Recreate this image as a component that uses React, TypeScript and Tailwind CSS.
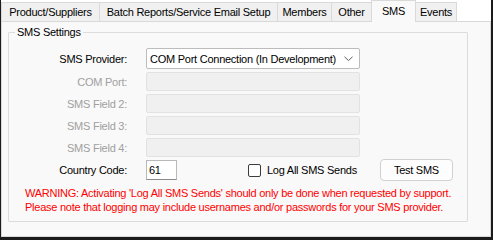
import React from "react";

const tabs = [
  { label: "Product/Suppliers", w: 99 },
  { label: "Batch Reports/Service Email Setup", w: 179 },
  { label: "Members", w: 55 },
  { label: "Other", w: 41 },
  { label: "SMS", w: 45, active: true },
  { label: "Events", w: 42 },
];

function Label({ text, disabled }: { text: string; disabled?: boolean }) {
  return (
    <div
      className={
        "w-[119px] shrink-0 text-right pr-px " +
        (disabled ? "text-[#a0a0a0]" : "text-black")
      }
    >
      {text}
    </div>
  );
}

function DisabledRow({ text }: { text: string }) {
  return (
    <div className="flex items-center h-[19px] gap-[18px]">
      <Label text={text} disabled />
      <div className="w-[214px] h-[19px] bg-[#f0f0f0] border border-[#e2e2e2] rounded-[2px]" />
    </div>
  );
}

export default function App() {
  return (
    <div
      className="w-[493px] h-[241px] bg-white text-[11px] leading-[14px] tracking-[-0.25px] whitespace-nowrap"
      style={{ fontFamily: '"Liberation Sans", Arial, sans-serif' }}
    >
      <div className="w-[493px] h-[240px] border-l border-r-2 border-b-[3px] border-[#1b1b1b] flex flex-col bg-white">
        {/* Tab strip */}
        <div className="h-[21px] flex items-end shrink-0 relative z-10">
          {tabs.map((t, i) =>
            t.active ? (
              <div
                key={t.label}
                style={{ width: t.w }}
                className="h-[22px] -mb-px -ml-px bg-[#f9f9f9] border border-b-0 border-[#d9d9d9] flex items-start justify-center pt-[3px] text-black relative z-10"
              >
                {t.label}
              </div>
            ) : (
              <div
                key={t.label}
                style={{ width: t.w }}
                className={
                  "h-[19px] bg-[#f0f0f0] border border-b-0 border-[#d9d9d9] flex items-center justify-center text-black " +
                  (i > 0 ? "-ml-px" : "")
                }
              >
                {t.label}
              </div>
            )
          )}
        </div>
        {/* Panel */}
        <div className="flex-1 border border-[#d9d9d9] bg-[#f9f9f9] pl-[6px] pt-[10px]">
          <div className="relative w-[460px] h-[190px] border border-[#dcdcdc] rounded-[1px]">
            <div className="absolute left-[6px] top-[-8px] px-[2px] bg-[#f9f9f9] text-black">
              SMS Settings
            </div>
            <div className="flex flex-col pt-[15px]">
              <div className="flex items-center h-[21px] gap-[18px]">
                <Label text="SMS Provider:" />
                <div className="w-[214px] h-[21px] bg-white border border-[#bcbcbc] rounded-[2px] flex items-center pl-[3px] pr-[6px] justify-between">
                  <span className="text-black">COM Port Connection (In Development)</span>
                  <svg width="9" height="6" viewBox="0 0 9 6" className="mt-px">
                    <path d="M0.5 0.8 L4.5 4.6 L8.5 0.8" fill="none" stroke="#5f5f5f" strokeWidth="1" />
                  </svg>
                </div>
              </div>
              <div className="flex flex-col gap-[3px] mt-[3px]">
                <DisabledRow text="COM Port:" />
                <DisabledRow text="SMS Field 2:" />
                <DisabledRow text="SMS Field 3:" />
                <DisabledRow text="SMS Field 4:" />
              </div>
              <div className="flex items-center h-[22px] mt-[2px]">
                <Label text="Country Code:" />
                <div className="ml-[18px] w-[31px] h-[20px] bg-white border border-[#b9b9b9] border-b-[#8a8a8a] flex items-center pl-[2px] text-black">
                  61
                </div>
                <div className="ml-[71px] w-[13px] h-[13px] rounded-[2px] border border-[#3c3c3c] bg-white" />
                <span className="ml-[6px] text-black">Log All SMS Sends</span>
                <div className="ml-[23px] w-[73px] h-[22px] rounded-[4px] border border-[#d0d0d0] bg-[#fdfdfd] flex items-center justify-center text-black">
                  Test SMS
                </div>
              </div>
              <div className="pl-[16px] mt-[5px] text-[#ff0000] leading-[14px]">
                <div>WARNING: Activating 'Log All SMS Sends' should only be done when requested by support.</div>
                <div>Please note that logging may include usernames and/or passwords for your SMS provider.</div>
              </div>
            </div>
          </div>
        </div>
      </div>
    </div>
  );
}
